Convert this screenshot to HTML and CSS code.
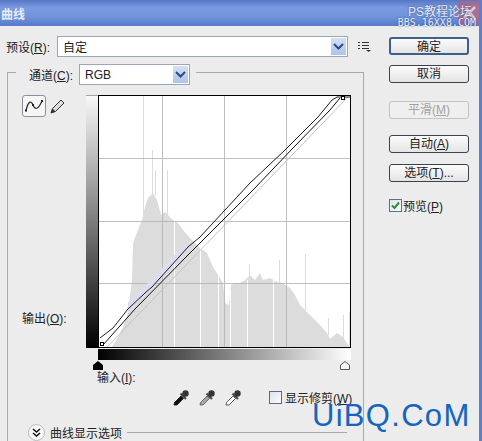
FILE: index.html
```html
<!DOCTYPE html>
<html lang="zh-CN">
<head>
    <meta charset="UTF-8">
    <title>曲线</title>
    <link rel="stylesheet" href="styles.css">
</head>
<body>
    <div class="dialog">
        <div class="titlebar">
            <span class="title">曲线</span>
            <svg class="forum-logo" width="22" height="24" viewBox="0 0 22 24">
                <rect x="0" y="0" width="22" height="24" rx="3" fill="#b5627c" opacity="0.7"/>
                <path d="M6 17 L17 6 M8 7 L17 18" stroke="#ecc9d0" stroke-width="2.5" fill="none"/>
            </svg>
            <div class="forum">
                <span class="forum-name">PS教程论坛</span>
                <span class="forum-url">BBS.16XX8.COM</span>
            </div>
        </div>

        <div class="content">
            <div class="main">
                <div class="preset-row">
                    <label class="preset-label">预设(<u>R</u>):</label>
                    <div class="combo preset-combo">
                        <span>自定</span>
                        <span class="combo-arrow"><svg width="11" height="7" viewBox="0 0 11 7"><path d="M1 1 L5.5 5.5 L10 1" fill="none" stroke="#2c4a86" stroke-width="2"/></svg></span>
                    </div>
                    <svg class="preset-menu" width="13" height="11" viewBox="0 0 13 11">
                        <path d="M0 1.5h2M4 1.5h7M0 4.5h2M4 4.5h7M0 7.5h2M4 7.5h7" stroke="#333" stroke-width="1.2"/>
                        <path d="M8 9h5l-2.5 2z" fill="#333"/>
                    </svg>
                </div>

                <div class="group">
                    <div class="group-head">
                        <label class="channel-label">通道(<u>C</u>):</label>
                        <div class="combo channel-combo">
                            <span>RGB</span>
                            <span class="combo-arrow"><svg width="11" height="7" viewBox="0 0 11 7"><path d="M1 1 L5.5 5.5 L10 1" fill="none" stroke="#2c4a86" stroke-width="2"/></svg></span>
                        </div>
                    </div>

                    <div class="graph-area">
                        <div class="graph-left">
                            <div class="tools">
                                <div class="tool-btn">
                                    <svg width="20" height="16" viewBox="0 0 20 16">
                                        <path d="M2 13 C4 3 7 2 9 7 C11 12 14 12 18 3" fill="none" stroke="#333" stroke-width="1.3"/>
                                        <rect x="1" y="11.5" width="2" height="2" fill="#222"/>
                                        <rect x="8" y="6" width="2" height="2" fill="#222"/>
                                        <rect x="17" y="2" width="2" height="2" fill="#222"/>
                                    </svg>
                                </div>
                                <svg class="pencil" width="16" height="16" viewBox="0 0 16 16">
                                    <path d="M1 15 L2.5 10.5 L11 2 L14 5 L5.5 13.5 Z" fill="#ddd" stroke="#333" stroke-width="1"/>
                                    <path d="M1 15 L2.5 10.5 L5.5 13.5 Z" fill="#333"/>
                                </svg>
                            </div>
                            <label class="output-label">输出(<u>O</u>):</label>
                        </div>
                        <div class="v-ramp"></div>
                        <svg class="plot" width="253" height="253" viewBox="0 0 253 253">
                            <rect x="0" y="0" width="253" height="253" fill="#fff"/>
                            <!-- spikes above the histogram -->
                            <path d="M45.5 0V120M54.5 55V100M57.5 75V100M69.5 75V120" stroke="#dcdcdc" stroke-width="1"/>
                            <path d="M151.5 169V190M181.5 165V190M207.5 159V215M230.5 223V240M245.5 220V245M251.5 217V252" stroke="#dcdcdc" stroke-width="1"/>
                            <!-- histogram -->
                            <polygon fill="#dcdcdc" points="14,252 20,242 25,232 30,218 34,185 35,148 40,135 44,125 47,112 50,103 55,98 59,105 63,120 67,117 72,122 75,125 80,128 85,135 92,143 102,153 109,158 115,172 122,183 125,188 127,208 131,210 133,190 137,188 142,188 147,185 152,180 157,185 162,178 165,185 172,183 179,187 184,188 192,193 197,200 202,210 209,217 215,223 222,230 229,238 232,244 239,238 245,242 250,250 252,252"/>
                            <path d="M76.5 125V252M102.5 153V252M120.5 180V252M132.5 195V252M149.5 185V252M175.5 185V252" stroke="#fff" stroke-width="1"/>
                            <!-- grid -->
                            <path d="M64.5 0V252M126.5 0V252M188.5 0V252M0 63.5H252M0 126.5H252M0 188.5H252" stroke="#b4b4b4" stroke-width="1" opacity="0.85"/>
                            <polygon fill="#dcdcf0" points="30,214 47,198 54,192 90,152 87,149 52,186 30,207"/>
                            <!-- curves -->
                            <path d="M9 252 L250 2" stroke="#c2c2c2" stroke-width="1" fill="none"/>
                            <path d="M2 243 L15 233 L30 214 L47 198 L54 192 L90 152 L102 142 L152 88 L187 55 L220 22 L234 5 L239 2 H252" stroke="#1a1a2a" stroke-width="1" fill="none"/>
                            <path d="M5 250 L37 214 L90 160 L102 148 L155 95 L195 53 L232 15 L242 3" stroke="#111" stroke-width="1" fill="none"/>
                            <rect x="2.5" y="247.5" width="3" height="3" fill="#fff" stroke="#000"/>
                            <rect x="243.5" y="1.5" width="3" height="3" fill="#fff" stroke="#000"/>
                            <rect x="0.5" y="0.5" width="252" height="252" fill="none" stroke="#000"/>
                        </svg>
                        <div class="h-ramp"></div>
                        <div class="sliders">
                            <svg width="10" height="9" viewBox="0 0 10 9"><path d="M5 0 L10 4 V9 H0 V4 Z" fill="#000"/></svg>
                            <svg width="10" height="9" viewBox="0 0 10 9"><path d="M5 .5 L9.5 4 V8.5 H.5 V4 Z" fill="#f2f2f2" stroke="#555"/></svg>
                        </div>
                    </div>

                    <label class="input-label">输入(<u>I</u>):</label>

                    <div class="picker-row">
                        <div class="pickers">
                            <svg width="16" height="17" viewBox="0 0 16 17">
                                <path d="M1 16 L1.5 13.5 L8 7 L10.5 9.5 L4 16 Z" fill="#111" stroke="#111" stroke-width="0.8"/>
                                <path d="M7.5 4.5 L13 10" stroke="#444" stroke-width="2"/>
                                <circle cx="12.5" cy="4.5" r="3.2" fill="#333"/>
                            </svg>
                            <svg width="16" height="17" viewBox="0 0 16 17">
                                <path d="M1 16 L1.5 13.5 L8 7 L10.5 9.5 L4 16 Z" fill="#a5a5a5" stroke="#555" stroke-width="0.8"/>
                                <path d="M7.5 4.5 L13 10" stroke="#444" stroke-width="2"/>
                                <circle cx="12.5" cy="4.5" r="3.2" fill="#333"/>
                            </svg>
                            <svg width="16" height="17" viewBox="0 0 16 17">
                                <path d="M1 16 L1.5 13.5 L8 7 L10.5 9.5 L4 16 Z" fill="#fff" stroke="#333" stroke-width="0.8"/>
                                <path d="M7.5 4.5 L13 10" stroke="#444" stroke-width="2"/>
                                <circle cx="12.5" cy="4.5" r="3.2" fill="#333"/>
                            </svg>
                        </div>
                        <div class="clip-option">
                            <span class="checkbox"></span>
                            <span>显示修剪(<u>W</u>)</span>
                        </div>
                    </div>

                    <div class="display-row">
                        <span class="disclosure"><svg width="9" height="9" viewBox="0 0 9 9"><path d="M1 1 L4.5 4 L8 1 M1 5 L4.5 8 L8 5" fill="none" stroke="#111" stroke-width="1.5"/></svg></span>
                        <span>曲线显示选项</span>
                        <span class="display-line"></span>
                    </div>
                </div>
            </div>

            <div class="side">
                <button class="btn btn-default">确定</button>
                <button class="btn">取消</button>
                <button class="btn btn-disabled">平滑(<u>M</u>)</button>
                <button class="btn">自动(<u>A</u>)</button>
                <button class="btn">选项(<u>T</u>)...</button>
                <div class="preview">
                    <span class="checkbox checked"><svg width="11" height="11" viewBox="0 0 11 11"><path d="M2 5.5 L4.5 8 L9 2.5" fill="none" stroke="#2f8a3a" stroke-width="2"/></svg></span>
                    <span>预览(<u>P</u>)</span>
                </div>
            </div>
        </div>

        <div class="watermark">UiBQ.CoM</div>
    </div>
</body>
</html>
```

FILE: styles.css
```css
html, body {
    margin: 0;
    padding: 0;
}
body {
    width: 482px;
    height: 441px;
    overflow: hidden;
    font-family: "Liberation Sans", "Noto Sans CJK SC", sans-serif;
    font-size: 12px;
    color: #222;
}
.dialog {
    position: relative;
    width: 482px;
    height: 441px;
    box-sizing: border-box;
    overflow: hidden;
    background-color: #ececec;
    border-right: 3px solid #5f7fc8;
}
.titlebar {
    position: relative;
    box-sizing: border-box;
    height: 26px;
    display: flex;
    align-items: center;
    justify-content: space-between;
    padding: 0 3px 0 1px;
    background: linear-gradient(to bottom, #5577c4 0, #7a9be0 30%, #7093da 65%, #567ac9 100%);
}
.title {
    font-size: 12px;
    font-weight: bold;
    color: #e6edf8;
}
.forum {
    position: relative;
    align-self: flex-start;
    display: flex;
    flex-direction: column;
    align-items: flex-end;
    padding-top: 6px;
    color: #e4ebf8;
    text-shadow: 0 0 2px #3c4f80;
}
.forum-name {
    font-size: 12px;
    line-height: 12px;
    margin-right: 4px;
}
.forum-url {
    font-family: "DejaVu Sans Mono", monospace;
    font-size: 10px;
    line-height: 10px;
}
.forum-logo {
    position: absolute;
    right: -1px;
    top: 1px;
}

.content {
    display: flex;
}
.main {
    width: 364px;
    margin-right: 25px;
}
.preset-row {
    display: flex;
    align-items: center;
    height: 21px;
    margin-top: 10px;
    padding-left: 6px;
    width: 378px;
}
.preset-label {
    width: 51px;
}
.combo {
    display: flex;
    align-items: center;
    justify-content: space-between;
    box-sizing: border-box;
    height: 21px;
    padding: 0 1px 0 5px;
    background-color: #fff;
    border: 1px solid #9aa5b5;
}
.preset-combo {
    width: 291px;
}
.channel-combo {
    width: 111px;
}
.combo-arrow {
    display: flex;
    align-items: center;
    justify-content: center;
    width: 15px;
    height: 17px;
    background: linear-gradient(to bottom, #d5e0f3, #aec3e6);
}
.preset-menu {
    margin-left: 10px;
}

.group {
    box-sizing: border-box;
    height: 400px;
    margin: 15px 0 0 7px;
    border: 1px solid #a9a9a9;
    border-bottom: none;
}
.group-head {
    display: flex;
    align-items: center;
    width: 180px;
    height: 21px;
    margin: -9px 0 0 8px;
    padding-left: 13px;
    box-sizing: border-box;
    background-color: #ececec;
}
.channel-label {
    width: 51px;
    flex: none;
    margin-right: -1px;
}

.graph-area {
    display: grid;
    grid-template-columns: 78px 12px 253px;
    grid-template-rows: 253px 12px 9px;
    margin-top: 10px;
}
.graph-left {
    display: flex;
    flex-direction: column;
    justify-content: space-between;
    padding: 0 0 21px 14px;
}
.tools {
    display: flex;
    align-items: center;
    gap: 4px;
}
.tool-btn {
    display: flex;
    align-items: center;
    justify-content: center;
    width: 22px;
    height: 20px;
    border: 1px solid #8c9099;
    border-radius: 3px;
    background-color: #f6f6f6;
}
.output-label {
    line-height: 16px;
}
.v-ramp {
    box-sizing: border-box;
    border-top: 1px solid #a5a5a5;
    background: linear-gradient(to bottom, #f8f8f8, #000);
}
.plot {
    display: block;
}
.h-ramp {
    grid-column: 3;
    grid-row: 2;
    margin-top: 1px;
    background: linear-gradient(to right, #000, #fff);
}
.sliders {
    grid-column: 3;
    grid-row: 3;
    display: flex;
    justify-content: space-between;
    margin: 1px 0 -1px -5px;
    width: 257px;
}
.input-label {
    display: block;
    margin: 1px 0 0 89px;
    line-height: 16px;
}
.picker-row {
    display: flex;
    align-items: center;
    margin-top: 3px;
    padding-left: 165px;
}
.pickers {
    display: flex;
    gap: 10px;
    width: 96px;
}
.clip-option {
    display: flex;
    align-items: center;
    gap: 3px;
    white-space: nowrap;
}
.checkbox {
    display: inline-block;
    box-sizing: border-box;
    width: 13px;
    height: 13px;
    border: 1px solid #5c6b80;
    background: linear-gradient(135deg, #dde3ea, #fafbfc);
}
.display-row {
    display: flex;
    align-items: center;
    gap: 5px;
    height: 17px;
    margin-top: 18px;
    padding-left: 20px;
}
.disclosure {
    display: flex;
    align-items: center;
    justify-content: center;
    width: 15px;
    height: 15px;
    border-radius: 50%;
    border: 1px solid #bbb;
    background-color: #f7f7f7;
}
.display-line {
    width: 220px;
    height: 1px;
    background-color: #a9a9a9;
}

.side {
    display: flex;
    flex-direction: column;
    width: 80px;
    padding-top: 11px;
}
.btn {
    box-sizing: border-box;
    width: 80px;
    height: 18px;
    padding: 0;
    margin-bottom: 11px;
    font-family: inherit;
    font-size: 12px;
    line-height: 16px;
    color: #222;
    background: linear-gradient(to bottom, #fbfbfb, #e4e4e4);
    border: 1px solid #39424f;
    border-radius: 3px;
}
.btn-default {
    border: 2px solid #3e5f8d;
    margin-bottom: 10px;
}
.btn-disabled {
    color: #a3a3a3;
    border-color: #c4c4c4;
    background: #efefef;
    margin-top: 7px;
    margin-bottom: 16px;
}
.preview {
    display: flex;
    align-items: center;
    gap: 1px;
    margin-top: 4px;
}
.checked {
    display: flex;
    align-items: center;
    justify-content: center;
    border-color: #60708a;
}
.watermark {
    position: absolute;
    left: 312px;
    top: 398px;
    font-size: 31px;
    line-height: 36px;
    letter-spacing: 1.3px;
    color: #1565c0;
}
```
